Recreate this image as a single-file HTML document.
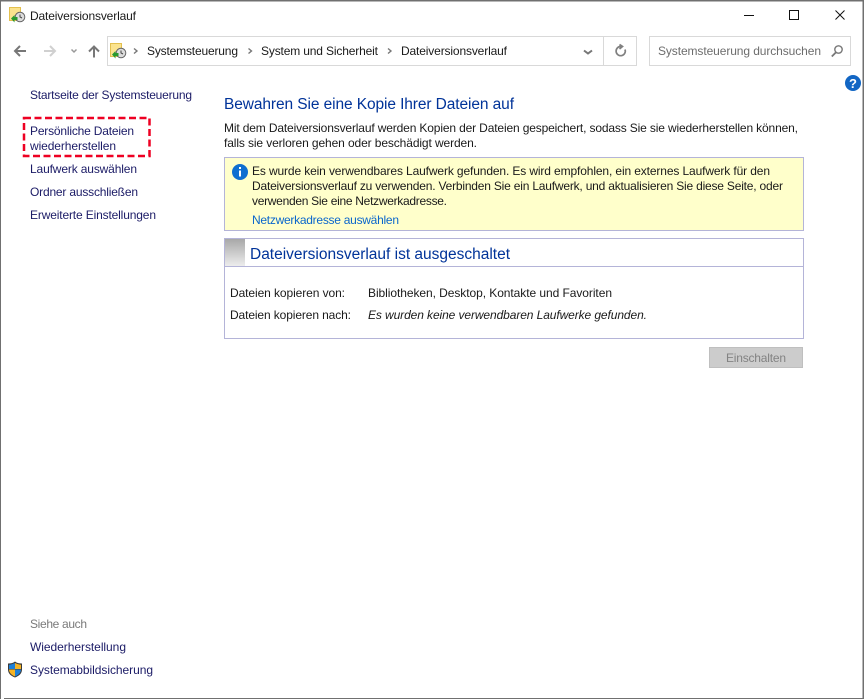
<!DOCTYPE html>
<html><head><meta charset="utf-8"><style>
html,body{margin:0;padding:0;background:#fff;width:864px;height:699px;overflow:hidden}
svg{display:block}
text{font-family:"Liberation Sans",sans-serif;font-size:12px;fill:#1a1a1a}
.l{fill:#1b1b66}
</style></head><body>
<svg width="864" height="699" viewBox="0 0 864 699" xmlns="http://www.w3.org/2000/svg">
<rect width="864" height="699" fill="#fff"/>
<rect x="0" y="0" width="864" height="1.500" fill="#707070"/>
<rect x="0" y="0" width="1" height="699" fill="#707070"/>
<rect x="862.500" y="0" width="1.500" height="699" fill="#707070"/>
<rect x="4" y="698" width="860" height="1" fill="#707070"/>

<g id="ic1">
<rect x="9.500" y="7.500" width="11" height="13" fill="#fbe38e" stroke="#e3c04f"/>
<circle cx="20" cy="17" r="4.800" fill="#dcdcdc" stroke="#666"/>
<path d="M20 14.500V17L22 18" stroke="#444" fill="none"/>
<path d="M11 18.500l3.500-3.500v2h3v3h-3v2.500z" fill="#2a9a30"/>
</g>
<text x="30" y="20" textLength="106">Dateiversionsverlauf</text>

<path d="M744 15.500h10" stroke="#111" stroke-width="1"/>
<rect x="789.500" y="10.500" width="9" height="9" fill="none" stroke="#111"/>
<path d="M835.500 10.500l9 9M844.500 10.500l-9 9" stroke="#111" fill="none"/>

<path d="M26 51H15M20 46L15 51l5 5" stroke="#777" stroke-width="2" fill="none"/>
<path d="M44 51h11M50 46L55 51l-5 5" stroke="#d0d0d0" stroke-width="2" fill="none"/>
<path d="M71.500 49.500l2.500 2.500 2.500-2.500" stroke="#999" stroke-width="1.500" fill="none"/>
<path d="M94 57.500V46.500M89 51.500L94 46.500l5 5" stroke="#777" stroke-width="2" fill="none"/>

<rect x="107.500" y="36.500" width="529" height="29" fill="#fff" stroke="#d9d9d9"/>
<path d="M603.500 37v28" stroke="#d9d9d9"/>
<use href="#ic1" x="101" y="36"/>
<path d="M134 48.500l3 2.500-3 2.500M248.500 48.500l3 2.500-3 2.500M388 48.500l3 2.500-3 2.500" stroke="#777" stroke-width="1.400" fill="none"/>
<text x="147" y="55" textLength="91">Systemsteuerung</text>
<text x="261" y="55" textLength="117">System und Sicherheit</text>
<text x="401" y="55" textLength="106">Dateiversionsverlauf</text>
<path d="M584 50.500l4 3 4-3" stroke="#777" stroke-width="2" fill="none"/>
<path d="M625 49.500a4.600 4.600 0 1 1-4.500-3H622M619.500 44.500l3 2-3 2.500" stroke="#808080" stroke-width="1.700" fill="none"/>

<rect x="649.500" y="36.500" width="201" height="29" fill="#fff" stroke="#d9d9d9"/>
<text x="658" y="55" textLength="163" style="fill:#6d6d6d">Systemsteuerung durchsuchen</text>
<circle cx="838.500" cy="49.500" r="3.700" fill="none" stroke="#777" stroke-width="1.400"/>
<path d="M835.800 52.500l-4 4" stroke="#777" stroke-width="1.800"/>

<circle cx="853" cy="83" r="8" fill="#1266c4"/>
<text x="849" y="88" style="font-size:13px;font-weight:bold;fill:#fff">?</text>

<text class="l" x="30" y="99" textLength="162">Startseite der Systemsteuerung</text>
<rect x="24" y="118" width="125.500" height="38" fill="none" stroke="#ee0022" stroke-width="2.500" stroke-dasharray="7 3.500"/>
<text class="l" x="30" y="135" textLength="104">Persönliche Dateien</text>
<text class="l" x="30" y="150" textLength="86">wiederherstellen</text>
<text class="l" x="30" y="173" textLength="107">Laufwerk auswählen</text>
<text class="l" x="30" y="196" textLength="108">Ordner ausschließen</text>
<text class="l" x="30" y="219" textLength="126">Erweiterte Einstellungen</text>

<text x="224" y="109" textLength="290" style="font-size:15.500px;fill:#003399">Bewahren Sie eine Kopie Ihrer Dateien auf</text>
<text x="224" y="132" textLength="574">Mit dem Dateiversionsverlauf werden Kopien der Dateien gespeichert, sodass Sie sie wiederherstellen können,</text>
<text x="224" y="147" textLength="253">falls sie verloren gehen oder beschädigt werden.</text>

<rect x="224.500" y="157.500" width="579" height="73" fill="#ffffcb" stroke="#b4b4d8"/>
<circle cx="240" cy="172" r="8" fill="#0f6fd0"/>
<rect x="239" y="170.500" width="2" height="6" fill="#fff"/>
<rect x="239" y="167" width="2" height="2" fill="#fff"/>
<text x="252" y="175" textLength="518">Es wurde kein verwendbares Laufwerk gefunden. Es wird empfohlen, ein externes Laufwerk für den</text>
<text x="252" y="190" textLength="531">Dateiversionsverlauf zu verwenden. Verbinden Sie ein Laufwerk, und aktualisieren Sie diese Seite, oder</text>
<text x="252" y="205" textLength="195">verwenden Sie eine Netzwerkadresse.</text>
<text x="252" y="224" textLength="147" style="fill:#0a66cc">Netzwerkadresse auswählen</text>

<defs><linearGradient id="g" x1="0" y1="0" x2="0" y2="1"><stop offset="0" stop-color="#a8a8a8"/><stop offset="1" stop-color="#eeeeee"/></linearGradient></defs>
<rect x="224.500" y="238.500" width="579" height="100" fill="#fff" stroke="#b4b4d8"/>
<rect x="225" y="239" width="20" height="27.500" fill="url(#g)"/>
<path d="M225 266.500h578" stroke="#b4b4d8"/>
<text x="250" y="259" textLength="260" style="font-size:15.500px;fill:#003399">Dateiversionsverlauf ist ausgeschaltet</text>
<text x="230" y="297" textLength="115">Dateien kopieren von:</text>
<text x="368" y="297" textLength="244">Bibliotheken, Desktop, Kontakte und Favoriten</text>
<text x="230" y="319" textLength="121">Dateien kopieren nach:</text>
<text x="368" y="319" textLength="279" font-style="italic">Es wurden keine verwendbaren Laufwerke gefunden.</text>

<rect x="709.500" y="347.500" width="93" height="20" fill="#cccccc" stroke="#bfbfbf"/>
<text x="726" y="362" textLength="60" style="fill:#838383">Einschalten</text>

<text x="30" y="628" textLength="57" style="fill:#7a7a7a">Siehe auch</text>
<text class="l" x="30" y="651" textLength="96">Wiederherstellung</text>
<text class="l" x="30" y="674" textLength="123">Systemabbildsicherung</text>
<path d="M15 661.500c2 1.500 4 2 7 2v6c0 4-3 6.500-7 8-4-1.500-7-4-7-8v-6c3 0 5-.5 7-2z" fill="#3a3a3a"/>
<path d="M15 663c2 1 3.500 1.500 6 1.700v4.300h-6z" fill="#f5b324"/>
<path d="M15 663c-2 1-3.500 1.500-6 1.700v4.300h6z" fill="#1c7fd8"/>
<path d="M9 669.500h6v7c-3-1.300-6-3.500-6-7z" fill="#f5b324"/>
<path d="M21 669.500h-6v7c3-1.300 6-3.500 6-7z" fill="#1c7fd8"/>
</svg>
</body></html>
